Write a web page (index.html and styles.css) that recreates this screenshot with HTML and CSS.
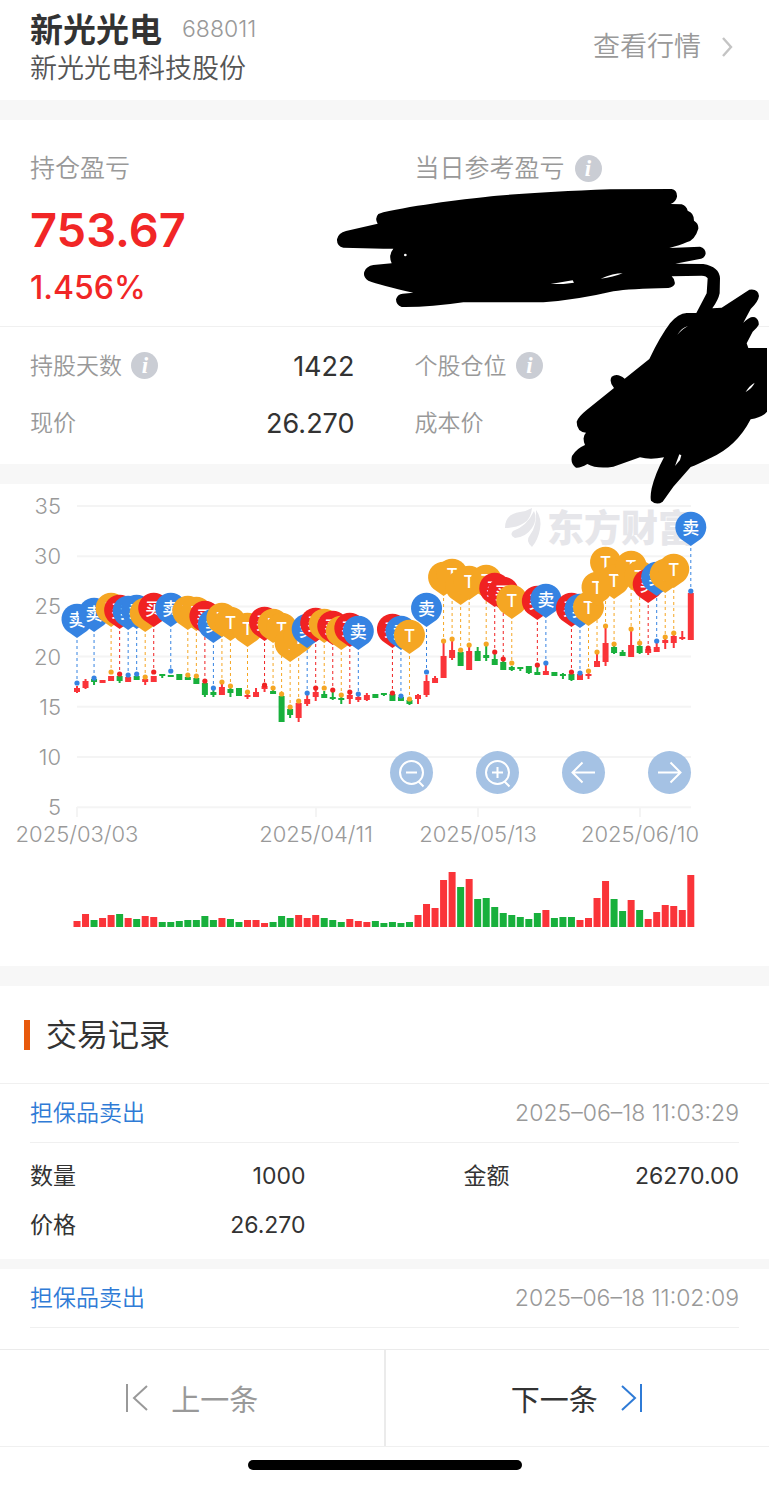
FILE: index.html
```html
<!DOCTYPE html>
<html lang="zh-CN">
<head>
  <meta charset="UTF-8" />
  <meta name="viewport" content="width=device-width, initial-scale=1.0" />
  <title>新光光电 688011</title>
  <link rel="stylesheet" href="styles.css">
</head>
<body>
  <header class="stock-header">
    <div>
      <h1>新光光电 <span class="code">688011</span></h1>
      <p class="company">新光光电科技股份</p>
    </div>
    <a class="quote-link" href="#">查看行情
      <svg width="12" height="20" viewBox="0 0 12 20"><path d="M2 1l8 9-8 9" fill="none" stroke="#c4c4c4" stroke-width="2.4"/></svg>
    </a>
  </header>

  <section class="summary">
    <div class="profit">
      <div>
        <h2>持仓盈亏</h2>
        <p class="amount">753.67</p>
        <p class="percent">1.456%</p>
      </div>
      <div>
        <h2>当日参考盈亏 <button class="info" aria-label="说明">i</button></h2>
      </div>
    </div>
    <dl class="details">
      <div><dt>持股天数 <button class="info" aria-label="说明">i</button></dt><dd>1422</dd></div>
      <div><dt>个股仓位 <button class="info" aria-label="说明">i</button></dt><dd></dd></div>
      <div><dt>现价</dt><dd>26.270</dd></div>
      <div><dt>成本价</dt><dd></dd></div>
    </dl>
    <svg class="scribble" viewBox="0 0 1317 1080" aria-hidden="true">
      <path d="M160 187C250 165 420 145 500 137Q640 126 840 118L1025 117Q1042 120 1041 140Q1038 155 1022 162L1055 163Q1070 168 1073 182Q1092 188 1092 212Q1106 220 1105 236Q1095 270 1070 277Q1050 286 1018 294L1110 290Q1127 295 1127 310Q1125 326 1105 328L1036 341L1120 342Q1168 350 1170 385L1169 430Q1165 450 1147 475L1175 473L1258 419Q1285 415 1287 438Q1285 455 1262 477L1240 518Q1262 496 1275 502Q1288 510 1286 525Q1280 535 1268 545L1250 580L1255 594L1311 594L1311 785Q1300 800 1262 808Q1220 890 1140 925Q1100 945 1082 951L1030 1010L998 1055Q980 1068 963 1052Q960 1040 965 1015Q976 970 1002 922Q960 930 930 922L850 950Q800 958 772 942Q750 955 738 953Q720 940 726 918Q740 895 765 885Q755 860 768 848Q740 845 740 815Q745 800 770 780L852 714Q836 695 845 680Q862 668 884 686L958 627Q990 560 1020 520Q1045 490 1070 489L1099 489L1130 430L1133 385Q1130 378 1115 377L1025 379Q1037 390 1034 403Q1028 413 1015 414Q900 416 850 424Q740 450 640 457L400 457Q300 472 215 471Q198 465 198 448Q203 432 218 431L250 428Q150 405 115 392Q98 380 103 365Q110 348 130 345L185 340Q174 315 190 296L160 296L40 293Q20 288 21 268Q25 248 48 243L143 221Q133 205 145 192Z"/>
      <g fill="#fff">
        <path d="M662 402L728 391L732 398L700 402Z"/>
        <path d="M812 386Q850 370 878 370Q850 382 812 386Z"/>
        <path d="M1042 554Q1055 533 1074 528Q1060 535 1042 554Z"/>
        <path d="M1247 726Q1258 707 1274 698Q1268 713 1247 726Z"/>
        <path d="M1035 948L1048 913L1054 916L1050 930Z"/>
        <circle cx="226" cy="315" r="4"/>
      </g>
    </svg>
  </section>

  <section class="chart">
    <svg id="kline" viewBox="0 484 769 482" role="img" aria-label="K线买卖点"></svg>
    <div class="chart-tools">
      <button aria-label="缩小"><svg viewBox="0 0 43 43"><circle cx="21.500" cy="21.500" r="11.500"/><path d="M16 21.500h11M28.500 30.500l5 5"/></svg></button>
      <button aria-label="放大"><svg viewBox="0 0 43 43"><circle cx="21.500" cy="21.500" r="11.500"/><path d="M16 21.500h11M21.500 16v11M28.500 30.500l5 5"/></svg></button>
      <button aria-label="向左"><svg viewBox="0 0 43 43"><path d="M33 21.500H10.500M20.500 11.500l-10 10 10 10"/></svg></button>
      <button aria-label="向右"><svg viewBox="0 0 43 43"><path d="M10 21.500h22.500M22.500 11.500l10 10-10 10"/></svg></button>
    </div>
  </section>

  <section class="records">
    <h2 class="records-title">交易记录</h2>
    <article class="record">
      <div class="record-head"><a href="#">担保品卖出</a><time>2025–06–18 11:03:29</time></div>
      <dl>
        <div><dt>数量</dt><dd>1000</dd></div>
        <div><dt>金额</dt><dd>26270.00</dd></div>
        <div><dt>价格</dt><dd>26.270</dd></div>
      </dl>
    </article>
    <article class="record">
      <div class="record-head"><a href="#">担保品卖出</a><time>2025–06–18 11:02:09</time></div>
    </article>
  </section>

  <nav class="pager">
    <button class="prev" disabled>
      <svg width="24" height="28" viewBox="0 0 24 28"><path d="M2 0v28M22 2L9 14l13 12"/></svg>
      上一条
    </button>
    <button class="next">
      下一条
      <svg width="24" height="28" viewBox="0 0 24 28"><path d="M21 0v28M2 2l13 12L2 26"/></svg>
    </button>
  </nav>
  <div class="home-bar"></div>

  <script src="chart.js"></script>
</body>
</html>
```

FILE: styles.css
```css
* {
  box-sizing: border-box;
}
body {
  margin: 0;
  background: #fff;
  color: #333;
  font-family: Inter, 'Noto Sans CJK SC', sans-serif;
}
h1, h2, p, dl, dd {
  margin: 0;
  font-weight: 400;
}
button {
  border: none;
  padding: 0;
  background: none;
  font-family: inherit;
  cursor: pointer;
}
a {
  text-decoration: none;
}

/* header */
.stock-header {
  display: flex;
  justify-content: space-between;
  padding: 10px 36px 12px 30px;
}
.stock-header h1 {
  display: flex;
  gap: 20px;
  font-size: 33px;
  line-height: 40px;
  font-weight: 700;
}
.stock-header .code {
  font-size: 23px;
  line-height: 38px;
  font-weight: 300;
  color: #999;
}
.company {
  font-size: 27px;
  line-height: 38px;
  font-weight: 350;
  color: #555;
}
.quote-link {
  display: flex;
  align-items: center;
  gap: 20px;
  font-size: 27px;
  font-weight: 350;
  line-height: 40px;
  padding-bottom: 4px;
  color: #999;
}

/* profit summary */
.summary {
  position: relative;
  border-top: 20px solid #f7f7f7;
  border-bottom: 20px solid #f7f7f7;
}
.profit {
  display: grid;
  grid-template-columns: 1fr 1fr;
  column-gap: 60px;
  padding: 30px 30px 16px;
  border-bottom: 1px solid #f0f0f0;
}
.profit h2 {
  font-size: 25px;
  line-height: 36px;
  font-weight: 350;
  color: #999;
}
.amount, .percent {
  color: #f12626;
}
.amount {
  margin-top: 14px;
  font-size: 47px;
  line-height: 60px;
  font-weight: 600;
}
.percent {
  margin-top: 6px;
  font-size: 32px;
  line-height: 44px;
  font-weight: 500;
}
.info {
  width: 27px;
  height: 27px;
  margin-left: 3px;
  border-radius: 50%;
  background: #cacdd4;
  color: #fff;
  font: italic bold 23px/27px 'Liberation Serif', serif;
  vertical-align: 1px;
}
.details {
  display: grid;
  grid-template-columns: 1fr 1fr;
  column-gap: 60px;
  padding: 11px 30px 12px;
  line-height: 57px;
}
.details div {
  display: flex;
  justify-content: space-between;
}
.details dt {
  font-size: 23px;
  font-weight: 350;
  color: #999;
}
.details dd {
  font-size: 27px;
}
.scribble {
  position: absolute;
  z-index: 2;
  top: 30px;
  right: 0;
  width: 439px;
  height: 360px;
}

/* chart */
.chart {
  position: relative;
  border-bottom: 20px solid #f7f7f7;
}
.chart > svg {
  display: block;
  width: 100%;
}
.axis {
  fill: #999;
  font-size: 22px;
  font-weight: 300;
}
.grid-line {
  stroke: #f4f4f4;
  stroke-width: 2;
}
.watermark {
  fill: #e6e6ea;
  font-size: 37px;
  font-weight: 900;
}
.pin-text {
  fill: #fff;
  font-size: 17px;
  font-weight: 500;
  text-anchor: middle;
}
.chart-tools {
  position: absolute;
  top: 267px;
  right: 78px;
  display: flex;
  gap: 43px;
}
.chart-tools button {
  width: 43px;
  height: 43px;
  border-radius: 50%;
  background: #a5c2e4;
}
.chart-tools svg {
  display: block;
  fill: none;
  stroke: #fff;
  stroke-width: 2;
}

/* trade records */
.records-title {
  position: relative;
  padding: 0 46px;
  font-size: 31px;
  line-height: 97px;
  border-bottom: 1px solid #f0f0f0;
}
.records-title::before {
  content: '';
  position: absolute;
  left: 24px;
  top: 34px;
  width: 6px;
  height: 30px;
  background: #e8590c;
}
.record {
  padding: 0 30px;
}
.record + .record {
  border-top: 10px solid #f7f7f7;
  padding-bottom: 21px;
}
.record-head {
  display: flex;
  justify-content: space-between;
  line-height: 58px;
  font-size: 23px;
  border-bottom: 1px solid #f0f0f0;
}
.record-head a {
  color: #2f7bd6;
  font-weight: 350;
}
.record-head time {
  color: #999;
  font-weight: 300;
}
.record dl {
  display: grid;
  grid-template-columns: 1fr 1fr;
  column-gap: 158px;
  padding: 9px 0;
  font-size: 23px;
  line-height: 49px;
}
.record dl div {
  display: flex;
  justify-content: space-between;
}

/* bottom pager */
.pager {
  display: flex;
  border-top: 1px solid #ebebeb;
  border-bottom: 1px solid #f0f0f0;
}
.pager button {
  flex: 1;
  display: flex;
  justify-content: center;
  align-items: center;
  gap: 22px;
  height: 96px;
  font-size: 29px;
  color: #333;
}
.pager svg {
  fill: none;
  stroke: #2f7bd6;
  stroke-width: 2;
}
.pager .prev {
  color: #999;
  border-right: 2px solid #ebebeb;
}
.pager .prev svg {
  stroke: #999;
}
.home-bar {
  width: 274px;
  height: 10px;
  margin: 13px auto 16px;
  border-radius: 5px;
  background: #000;
}
```

FILE: chart.js
```js
const RED = '#fa3439', GREEN = '#18b03c';
const PIN = { B: '#f02222', S: '#3583e2', T: '#f5a623' };
const LABEL = { B: '买', S: '卖', T: 'T' };
const X0 = 77, STEP = 8.525, BASE = 927;

// color, wick top, body top, body bottom, wick bottom, volume, [pin type, pin y, dot y]
const days = [
  ['r',686,688,692,693,6,'S',620,683], ['r',679,681,688,689,13], ['g',677,679,682,685,7,'S',614,678],
  ['r',680,680,683,683,9], ['r',676,676,681,681,12,'T',609,672], ['g',676,676,681,683,13,'B',611,674],
  ['r',677,677,682,682,9,'S',612,675], ['g',676,676,680,680,8,'S',611,674], ['r',679,679,682,685,11,'T',614,677],
  ['r',676,676,682,682,10,'B',609,672], ['g',674,674,676,678,5], ['g',675,675,677,677,5,'S',609,671],
  ['g',674,674,680,680,6], ['g',677,677,680,680,7,'T',612,675], ['g',678,678,684,684,7,'T',613,676],
  ['g',683,683,695,697,11,'B',617,681], ['g',690,692,695,697,7,'S',625,688], ['r',684,687,695,695,9,'T',619,682],
  ['g',688,689,693,697,8,'T',623,686], ['g',688,688,696,696,5], ['r',694,695,697,699,7,'T',629,692],
  ['r',688,692,697,697,7], ['r',685,686,689,692,4,'B',623,685], ['g',690,691,694,694,5,'T',625,688],
  ['g',696,696,722,722,11,'T',629,694], ['g',708,709,715,718,9,'T',644,707], ['r',702,703,718,722,12,'T',638,701],
  ['r',695,699,704,706,9,'S',630,693], ['r',690,692,697,701,12,'B',624,688], ['g',691,694,698,698,9,'T',625,688],
  ['g',692,697,699,700,7,'B',627,690], ['g',696,698,700,704,5,'T',632,695], ['r',694,695,699,704,8,'B',629,692],
  ['r',696,697,700,702,6,'S',632,694], ['r',693,695,700,701,5], ['g',694,694,698,698,6], ['g',693,693,695,696,4],
  ['g',694,694,701,701,5,'B',630,693], ['g',697,697,701,701,4,'S',632,696], ['g',700,700,704,705,5,'T',636,699],
  ['r',694,695,699,704,12], ['r',675,681,695,697,23,'S',609,672], ['r',676,678,683,683,19],
  ['r',641,656,678,678,47,'T',578,641], ['r',641,650,658,660,55,'T',575,639], ['g',650,652,666,666,40,'T',587,650],
  ['r',647,651,670,670,48,'T',582,645], ['g',647,651,661,661,28], ['g',645,655,658,661,29,'T',581,644],
  ['g',653,659,665,665,20,'B',589,652], ['g',659,662,670,670,14,'B',593,659], ['g',666,667,670,671,12,'T',601,663],
  ['g',667,667,669,671,10], ['g',666,666,673,674,8], ['g',666,672,675,675,14,'B',602,665],
  ['r',665,671,675,675,17,'S',600,663], ['g',672,672,676,676,9], ['g',673,674,676,679,10],
  ['g',673,674,680,681,10,'B',609,672], ['r',674,674,680,680,7,'S',610,673], ['r',671,674,676,679,9,'T',608,671],
  ['r',652,661,667,667,29,'T',588,652], ['r',626,643,662,666,46,'T',563,626], ['g',645,647,653,654,28,'T',581,644],
  ['g',650,652,656,656,16], ['r',629,645,657,657,27,'T',567,629], ['g',644,646,653,654,17,'T',577,643],
  ['r',648,649,653,655,8,'B',585,648], ['r',643,647,652,652,15,'S',578,641], ['r',638,640,643,649,22,'T',575,637],
  ['r',634,636,643,648,21,'T',570,633], ['r',631,637,639,640,17], ['r',591,593,640,640,52,'S',528,591]
];

let svg = '';

for (let i = 0; i < 7; i++) {
  const y = 506 + i * 50.2;
  svg += `<line class="grid-line" x1="77" x2="691" y1="${y}" y2="${y}"/>`;
  svg += `<text class="axis" x="61" y="${y + 8}" text-anchor="end">${35 - i * 5}</text>`;
}

[[77, '2025/03/03'], [316, '2025/04/11'], [478, '2025/05/13'], [640, '2025/06/10']].forEach(([x, d]) => {
  svg += `<line class="grid-line" x1="${x}" x2="${x}" y1="807" y2="817"/>`;
  svg += `<text class="axis" x="${x}" y="842" text-anchor="middle">${d}</text>`;
});

svg += `<g fill="#e6e6ea">
  <path d="M505 528C505 518 511 513 520 512Q527 511 532 508Q531 519 524 523Q516 528 505 528Z"/>
  <path d="M515 538Q509 535 513 531Q527 526 534 511Q538 519 532 528Q526 537 515 538Z"/>
  <path d="M532 547Q525 541 530 535Q537 526 536 510Q542 518 540 529Q538 540 532 547Z"/>
</g><text class="watermark" x="547" y="542">东方财富</text>`;

days.forEach(([c, hi, top, bottom, lo, vol], i) => {
  const x = X0 + i * STEP;
  const color = c === 'r' ? RED : GREEN;
  svg += `<g fill="${color}">
    <rect x="${x - 1}" y="${hi}" width="2" height="${lo - hi}"/>
    <rect x="${x - 3}" y="${top}" width="6" height="${bottom - top}"/>
    <rect x="${x - 3.5}" y="${BASE - vol}" width="7" height="${vol}"/>
  </g>`;
});

days.forEach((day, i) => {
  const [type, y, dot] = day.slice(6);
  if (!type) return;
  const x = X0 + i * STEP;
  const color = PIN[type];
  svg += `<line x1="${x}" x2="${x}" y1="${y + 20}" y2="${dot}" stroke="${color}" stroke-dasharray="3 3"/>
    <circle fill="${color}" cx="${x}" cy="${dot}" r="2.6"/>`;
});

// pins go last, each one over its left neighbour
days.forEach((day, i) => {
  const [type, y] = day.slice(6);
  if (!type) return;
  const x = X0 + i * STEP;
  svg += `<path fill="${PIN[type]}" d="M${x} ${y + 18}L${x - 10} ${y + 11}A15.5 15.5 0 1 1 ${x + 10} ${y + 11}Z"/>
    <text class="pin-text" x="${x}" y="${y + 6}">${LABEL[type]}</text>`;
});

document.getElementById('kline').innerHTML = svg;
```
